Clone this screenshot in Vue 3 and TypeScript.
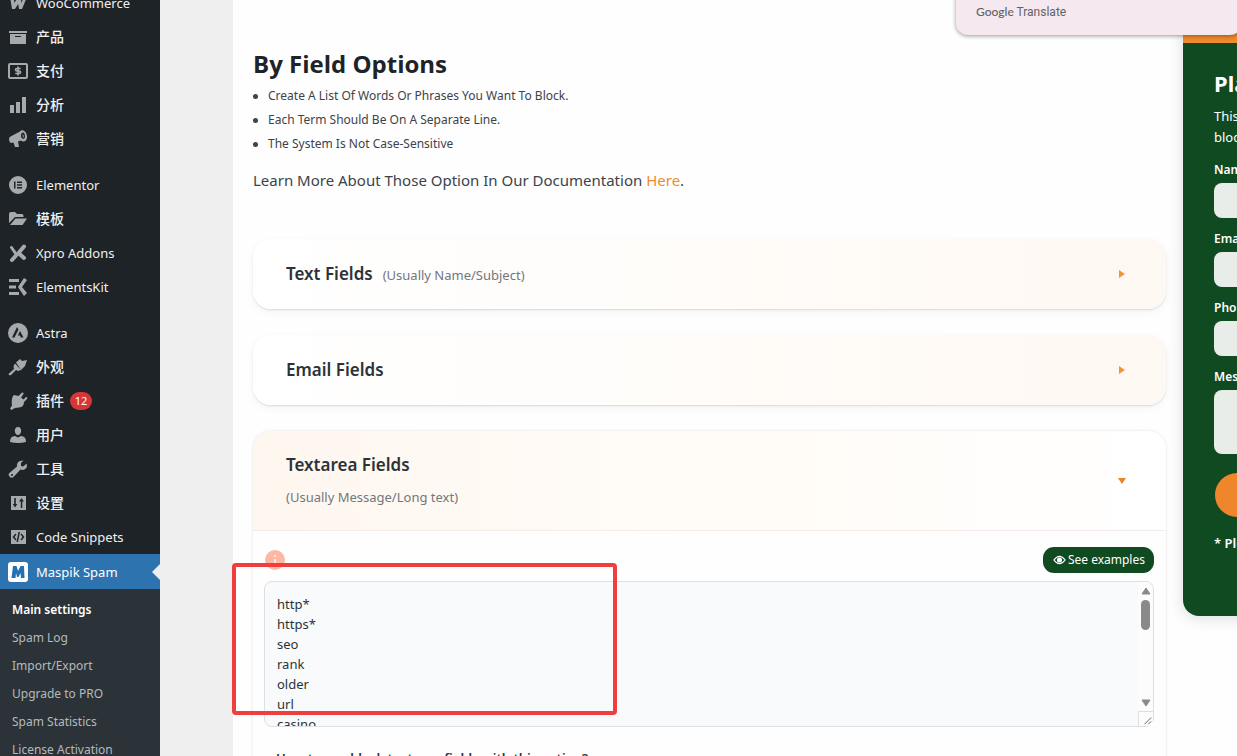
<script setup lang="ts">
interface MenuItem { label: string; icon: string; gap?: boolean; cjk?: boolean; badge?: number; active?: boolean }

const menu: MenuItem[] = [
  { label: 'WooCommerce', icon: 'woo' },
  { label: '产品', icon: 'archive', cjk: true },
  { label: '支付', icon: 'pay', cjk: true },
  { label: '分析', icon: 'chart', cjk: true },
  { label: '营销', icon: 'horn', cjk: true },
  { label: 'Elementor', icon: 'elementor', gap: true },
  { label: '模板', icon: 'folder', cjk: true },
  { label: 'Xpro Addons', icon: 'xpro' },
  { label: 'ElementsKit', icon: 'ekit' },
  { label: 'Astra', icon: 'astra', gap: true },
  { label: '外观', icon: 'brush', cjk: true },
  { label: '插件', icon: 'plug', cjk: true, badge: 12 },
  { label: '用户', icon: 'user', cjk: true },
  { label: '工具', icon: 'wrench', cjk: true },
  { label: '设置', icon: 'sliders', cjk: true },
  { label: 'Code Snippets', icon: 'code' },
  { label: 'Maspik Spam', icon: 'maspik', active: true },
]
const submenu: string[] = ['Main settings', 'Spam Log', 'Import/Export', 'Upgrade to PRO', 'Spam Statistics', 'License Activation']
const tips: string[] = [
  'Create A List Of Words Or Phrases You Want To Block.',
  'Each Term Should Be On A Separate Line.',
  'The System Is Not Case-Sensitive',
]
const fields: string[] = ['Name', 'Email', 'Phone']
const terms: string = ['http*', 'https*', 'seo', 'rank', 'older', 'url', 'casino'].join('\n')
</script>

<template>
  <div class="page">
    <nav class="sidebar" aria-label="Admin menu">
      <ul class="menu">
        <li v-for="item in menu" :key="item.label" :class="{ gap: item.gap }">
          <a href="#" class="item" :class="{ active: item.active }">
            <svg class="icon" viewBox="0 0 20 20" aria-hidden="true">
              <path v-if="item.icon === 'woo'" d="M2 4h4l.3 6L10 4h3l.3 6L16 4h3l-5 12h-3l-.8-5L7 16H4z" />
              <path v-else-if="item.icon === 'archive'" d="M1 4h18v2H1zM2 7h16v10H2zM7 9v1h6V9z" fill-rule="evenodd" />
              <g v-else-if="item.icon === 'pay'" fill="none" stroke="currentColor">
                <rect x="1" y="3" width="18" height="14" rx="1" stroke-width="2" />
                <path d="M12.700 7.500H9q-1.500 0-1.500 1.250T9 10h2q1.600 0 1.600 1.250T11 12.500H7.300M10 5.500v9" stroke-width="1.600" />
              </g>
              <path v-else-if="item.icon === 'chart'" d="M2 10h4v8H2zM8 7h4v11H8zM14 2h4v16h-4z" />
              <path v-else-if="item.icon === 'horn'" fill-rule="evenodd" d="M1 10q0-2 2-2.700L12 2.500C14-.5 18.500 2 19 7c.4 5-3.500 7-6 4.600l-3 .9 1 5.500H7L5.500 13.500 3 14q-2-1-2-4zM13 7c.2 3 4 4.500 4 .2C17 2.500 13 2 13 7zM14.500 5l1.500 2-1 2z" />
              <path v-else-if="item.icon === 'elementor'" fill-rule="evenodd" d="M10 1a9 9 0 1 1 0 18 9 9 0 0 1 0-18zM6 6.500v7h1.500v-7zM9 6.500V8h5V6.500zM9 9.300v1.500h5V9.300zM9 12v1.500h5V12z" />
              <path v-else-if="item.icon === 'folder'" d="M1 14V5q0-2 2-2h4l2 2h5q1.500 0 1.500 2v1H7zM2 16l5.500-6.500H19L14.500 16z" />
              <g v-else-if="item.icon === 'xpro'" fill="none" stroke="currentColor" stroke-linecap="round">
                <path d="M16 3.500L10.500 10l5.500 5M4 17l4.500-5" stroke-width="4" />
                <path d="M3.500 4.500L8 11" stroke-width="3" />
              </g>
              <path v-else-if="item.icon === 'ekit'" d="M1 2h10v3H1zM1 8.500h7v3H1zM1 15h10v3H1zM16 1l3 2-5 7 5 6-3 3-6-9z" />
              <path v-else-if="item.icon === 'astra'" fill-rule="evenodd" d="M10 0a10 10 0 1 1 0 20 10 10 0 0 1 0-20zM9 4l-5 10.500h2.500L10.500 6.500zM12 8l-2.200 4.500H12l.8 2H15.500z" />
              <path v-else-if="item.icon === 'brush'" d="M8 5.500L12 2l2 2 5-1-2 6-4 4zM7 6.500l6 6.500-3 1-2-1-5 5q-2 1-2.500-1L6 12 5.500 9z" />
              <path v-else-if="item.icon === 'plug'" d="M10.500 5L14 1.500q2-.5 1.500 1.500L13 6.500l2.500 2L18 6q2 0 1 2l-3 3q0 5-5 5.500L7 17l-3.500 2L2 17.500l2-3Q3 9 5 5l1-1z" />
              <path v-else-if="item.icon === 'user'" d="M10 2c4.600 0 3.800 8 0 8S5.400 2 10 2zM2 17q0-6 5-6l3 1.500L13 11q5 0 5 6-8 2-16 0z" />
              <path v-else-if="item.icon === 'wrench'" fill-rule="evenodd" d="M17 6l1.500-1.500Q20 9 16.500 10.500q-2 .8-4 0L6 17.500Q3.500 20 1.500 17.500T2 13.500L9 7.500Q8.500 3.500 12 2l3.500-.5L13 4v3l2 .5zM4 15a1 1 0 1 0 .1 2A1 1 0 0 0 4 15z" />
              <path v-else-if="item.icon === 'sliders'" fill-rule="evenodd" d="M3 3h15v14H3zM6.200 5v6H4.700L7 14.500 9.300 11H7.800V5zM12.800 8.500V15h1.500V8.500H16L13.500 5 11 8.500z" />
              <path v-else-if="item.icon === 'code'" fill-rule="evenodd" d="M3 3h15v14H3zM7.500 6.500L4.500 10l3 3.500 1-1L6.500 10l2-2.500zM10.500 5l-2 10H10l2-10zM13.500 6.500l-1 1 2 2.500-2 2.500 1 1 3-3.500z" />
              <g v-else>
                <rect width="20" height="20" rx="3" fill="#fff" />
                <path d="M5 4h3.500l1.500 5 2.500-5H16l.5 12H13l-.5-5-2 4H9l-1-4-.5 5H3.500z" fill="#2271b1" />
              </g>
            </svg>
            <span :class="{ cjk: item.cjk }">{{ item.label }}</span>
            <span v-if="item.badge" class="badge">{{ item.badge }}</span>
          </a>
        </li>
      </ul>
      <ul class="submenu">
        <li v-for="(entry, i) in submenu" :key="entry"><a href="#" :class="{ current: i === 0 }">{{ entry }}</a></li>
      </ul>
    </nav>

    <div class="sheet">
      <main class="content">
        <h1>By Field Options</h1>
        <ul class="tips">
          <li v-for="tip in tips" :key="tip">{{ tip }}</li>
        </ul>
        <p class="learn">Learn More About Those Option In Our Documentation <a href="#">Here</a>.</p>

        <div class="cards">
          <section class="card">
            <button type="button" class="head">
              <span class="title">Text Fields <small>(Usually Name/Subject)</small></span>
              <svg class="arrow" viewBox="0 0 8 8" aria-hidden="true"><path d="M1 0l6 4-6 4z" /></svg>
            </button>
          </section>
          <section class="card">
            <button type="button" class="head">
              <span class="title">Email Fields</span>
              <svg class="arrow" viewBox="0 0 8 8" aria-hidden="true"><path d="M1 0l6 4-6 4z" /></svg>
            </button>
          </section>
          <section class="card open">
            <button type="button" class="head">
              <span class="title stacked">Textarea Fields <small>(Usually Message/Long text)</small></span>
              <svg class="arrow" viewBox="0 0 8 8" aria-hidden="true"><path d="M0 1h8L4 7z" /></svg>
            </button>
            <div class="body">
              <div class="tools">
                <button type="button" class="info" aria-label="Information">
                  <svg viewBox="0 0 20 20" aria-hidden="true"><path d="M9 5h2v2H9zM9 9h2v4H9z" fill="#fff" opacity=".7" /></svg>
                </button>
                <button type="button" class="examples">
                  <svg viewBox="0 0 14 10" aria-hidden="true"><path d="M1 5q6-8 12 0-6 8-12 0z" fill="none" stroke="#fff" stroke-width="1.300" /><circle cx="7" cy="5" r="2.700" fill="#fff" /></svg>
                  See examples
                </button>
              </div>
              <div class="editor">
                <textarea aria-label="Blocked terms" :value="terms"></textarea>
                <div class="scroll" aria-hidden="true">
                  <svg viewBox="0 0 10 8"><path d="M5 1l4 6H1z" stroke-width="1" stroke-linejoin="round" /></svg>
                  <i class="thumb"></i>
                  <svg viewBox="0 0 10 8"><path d="M5 7l4-6H1z" stroke-width="1" stroke-linejoin="round" /></svg>
                  <svg class="grip" viewBox="0 0 15 15"><path d="M6 13l7-7M10 13l3-3" /></svg>
                </div>
                <div class="marker"></div>
              </div>
              <p class="question">How to use block textarea fields with this option?</p>
            </div>
          </section>
        </div>
      </main>

      <aside class="side">
        <form class="panel">
          <h2>Plan</h2>
          <p class="intro">This form<br>block</p>
          <div v-for="field in fields" :key="field" class="field">
            <label :for="field">{{ field }}</label>
            <input :id="field" type="text">
          </div>
          <div class="field">
            <label for="message">Message</label>
            <textarea id="message"></textarea>
          </div>
          <button type="submit" class="send" aria-label="Send"></button>
          <p class="note">* Please</p>
        </form>
      </aside>
    </div>
    <div class="translate"><span class="brand">Google</span> Translate</div>
  </div>
</template>

<style>
html, body { margin: 0; height: 100%; overflow: hidden; }
</style>

<style scoped>
* { box-sizing: border-box; }
.page {
  position: relative; display: flex; height: 100vh; overflow: hidden; background: #efefef;
  font-family: "Noto Sans", "Noto Sans CJK SC", sans-serif; font-size: 14px; color: #3c434a;
}
ul, p, h1, h2 { margin: 0; padding: 0; list-style: none; }
button { font: inherit; border: 0; padding: 0; color: inherit; text-align: left; }
a { text-decoration: none; }
.sidebar { flex: 0 0 160px; background: #1d2327; }
.menu { margin-top: -14px; }
.gap { margin-top: 12px; }
.item { position: relative; display: flex; align-items: center; height: 34px; padding: 0 8px; color: #f0f0f1; font-size: 13px; line-height: 20px; white-space: nowrap; }
.cjk { padding-bottom: 2px; font-family: "Noto Sans CJK SC", sans-serif; font-size: 14px; font-weight: 500; }
.icon { width: 20px; height: 20px; margin-right: 8px; color: #a7aaad; fill: currentColor; }
.badge { min-width: 22px; height: 18px; margin-left: 6px; border-radius: 9px; background: #d63638; color: #fff; font-size: 11px; line-height: 18px; text-align: center; }
.active { height: 35px; background: #2c73b0; color: #fff; }
.active::after { content: ""; position: absolute; right: 0; top: 10px; border: 8px solid transparent; border-left: 0; border-right-color: #efefef; }
.submenu { height: 400px; padding: 7px 12px; background: #2c3338; font-size: 12px; line-height: 28px; white-space: nowrap; }
.submenu a { color: #b4b9be; }
.submenu .current { color: #fff; font-weight: 600; }

.sheet { flex: 1; display: flex; min-width: 0; margin-left: 73px; background: #fefefe; }
.content { flex: 1; min-width: 0; padding: 46px 17px 0 20px; }
h1 { font: 700 24px/36px "Open Sans", sans-serif; color: #1d2327; }
.tips { margin-top: 2px; font-size: 12px; line-height: 24px; }
.tips li { display: flex; align-items: center; }
.tips li::before { content: ""; width: 5px; height: 5px; margin-right: 10px; border-radius: 50%; background: #3c434a; }
.learn { margin-top: 12px; font-size: 15px; line-height: 24px; }
.learn a { color: #f08a2c; }
.cards { display: flex; flex-direction: column; gap: 26px; margin-top: 47px; }
.card { border-radius: 18px; box-shadow: 0 1px 2px rgba(0,0,0,.12), 0 3px 10px rgba(0,0,0,.04); }
.head { display: flex; align-items: center; justify-content: space-between; width: 100%; min-height: 70px; padding: 0 40px 0 33px; border-radius: 18px; background: linear-gradient(90deg, #fff, #fef8f2); }
.title { display: flex; align-items: baseline; gap: 10px; font-size: 17px; line-height: 26px; font-weight: 600; color: #2c3338; }
.title small { font-size: 13px; font-weight: 400; color: #72777c; }
.stacked { flex-direction: column; gap: 6px; }
.arrow { width: 8px; height: 8px; fill: #f0953f; }
.open { box-shadow: 0 0 3px rgba(0,0,0,.12); border-radius: 18px 18px 0 0; }
.open .head { min-height: 100px; border-radius: 18px 18px 0 0; background: linear-gradient(90deg, #fef7f0, #fffcf8 60%, #fff); border-bottom: 1px solid #f3ece8; }
.open .arrow { fill: #ea8426; }
.body { height: 300px; padding: 16px 12px 0 11px; }
.tools { display: flex; align-items: center; justify-content: space-between; height: 26px; }
.info { width: 20px; height: 20px; margin-left: 1px; border-radius: 50%; background: #fdb7a2; }
.info svg { display: block; }
.examples { display: flex; align-items: center; gap: 2px; height: 26px; padding: 0 9px 0 10px; border-radius: 11px; background: #0f4a21; color: #fff; font: 12px/20px "Noto Sans", sans-serif; }
.examples svg { width: 13px; height: 10px; }
.editor { position: relative; display: flex; height: 146px; margin-top: 8px; border: 1px solid #dcdfe3; border-radius: 8px; background: #f8fafc; }
.editor textarea { flex: 1; min-width: 0; padding: 12px 12px 0; border: 0; outline: 0; resize: none; overflow: hidden; background: transparent; color: #2c3338; font: 13px/20px "Noto Sans", sans-serif; }
.scroll { display: flex; flex-direction: column; align-items: center; width: 15px; padding-top: 5px; background: #fcfcfc; fill: #8a8a8a; stroke: #8a8a8a; border-radius: 0 8px 0 0; }
.scroll svg { width: 10px; height: 8px; }
.thumb { width: 9px; height: 30px; margin: 5px 0 auto; border-radius: 5px; background: #8a8a8a; }
.scroll .grip { width: 15px; height: 15px; margin-top: 4px; fill: none; stroke: #555; border: 1px solid #dcdfe3; border-width: 1px 0 0 1px; }
.marker { position: absolute; left: -33px; top: -19px; width: 385px; height: 152px; border: 4px solid #f03e3e; border-radius: 4px; pointer-events: none; }
.question { margin: 19px 12px; font-size: 13px; line-height: 24px; font-weight: 600; color: #2c3338; }

.side { flex: 0 0 54px; min-width: 0; }
.panel { width: 320px; height: 616px; padding: 68px 31px 0; border-radius: 0 0 16px 16px; background: linear-gradient(#f08a2c 43px, #0f4a21 43px); box-shadow: 0 2px 16px rgba(0,0,0,.14); color: #fff; }
.panel h2 { font-size: 22px; line-height: 30px; font-weight: 700; }
.intro { margin: 8px 0 13px; font-size: 13px; line-height: 21px; }
.field { margin-bottom: 12px; }
.field label { display: block; font-size: 12px; line-height: 18px; font-weight: 600; }
.field input, .field textarea { display: block; width: 100%; height: 35px; margin-top: 4px; border: 0; border-radius: 8px; background: #e8ede9; resize: none; }
.field textarea { height: 64px; }
.send { display: block; width: 160px; height: 44px; margin: 19px 1px 0; border-radius: 22px; background: #f0862b; }
.note { margin-top: 15px; font-size: 13px; line-height: 22px; font-weight: 600; }
.translate { position: absolute; top: -20px; left: 956px; right: -5px; height: 55px; padding: 24px 20px 0; border-radius: 0 0 12px 12px; background: #f6e8ef; box-shadow: 0 1px 4px rgba(0,0,0,.4); color: #5f6368; font: 12px/16px Roboto, sans-serif; }
.brand { font: 500 12px/16px Lato, sans-serif; }
</style>
